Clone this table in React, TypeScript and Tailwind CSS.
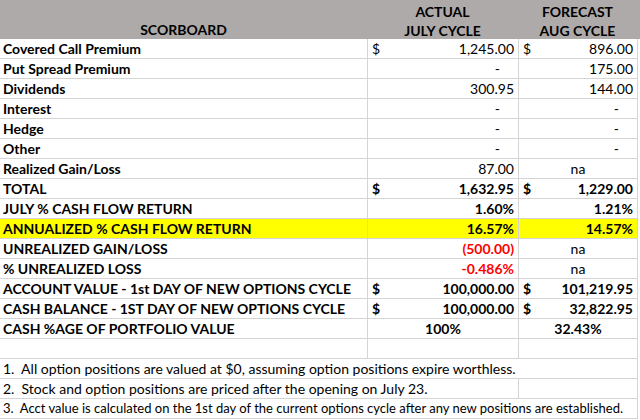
import React from "react";

type Cell = {
  v?: string;
  dollar?: boolean;
  bold?: boolean;
  red?: boolean;
  center?: boolean;
  dash?: boolean;
};

type Row = {
  label: string;
  a?: Cell;
  f?: Cell;
  yellow?: boolean;
};

const rows: Row[] = [
  { label: "Covered Call Premium", a: { v: "1,245.00", dollar: true }, f: { v: "896.00", dollar: true } },
  { label: "Put Spread Premium", a: { v: "-", dash: true }, f: { v: "175.00" } },
  { label: "Dividends", a: { v: "300.95" }, f: { v: "144.00" } },
  { label: "Interest", a: { v: "-", dash: true }, f: { v: "-", dash: true } },
  { label: "Hedge", a: { v: "-", dash: true }, f: { v: "-", dash: true } },
  { label: "Other", a: { v: "-", dash: true }, f: { v: "-", dash: true } },
  { label: "Realized Gain/Loss", a: { v: "87.00" }, f: { v: "na", center: true } },
  { label: "TOTAL", a: { v: "1,632.95", dollar: true, bold: true }, f: { v: "1,229.00", dollar: true, bold: true } },
  { label: "JULY % CASH FLOW RETURN", a: { v: "1.60%", bold: true }, f: { v: "1.21%", bold: true } },
  { label: "ANNUALIZED % CASH FLOW RETURN", a: { v: "16.57%", bold: true }, f: { v: "14.57%", bold: true }, yellow: true },
  { label: "UNREALIZED GAIN/LOSS", a: { v: "(500.00)", bold: true, red: true }, f: { v: "na", center: true } },
  { label: "% UNREALIZED LOSS", a: { v: "-0.486%", bold: true, red: true }, f: { v: "na", center: true } },
  { label: "ACCOUNT VALUE - 1st DAY OF NEW OPTIONS CYCLE", a: { v: "100,000.00", dollar: true, bold: true }, f: { v: "101,219.95", dollar: true, bold: true } },
  { label: "CASH BALANCE - 1ST DAY OF NEW OPTIONS CYCLE", a: { v: "100,000.00", dollar: true, bold: true }, f: { v: "32,822.95", dollar: true, bold: true } },
  { label: "CASH %AGE OF PORTFOLIO VALUE", a: { v: "100%", bold: true, center: true }, f: { v: "32.43%", bold: true, center: true } },
  { label: "" },
];

function ValueCell({ c, width }: { c?: Cell; width: string }) {
  return (
    <div
      className={`${width} h-full border-l border-[#d4d4d4] flex items-center px-[4px] ${
        c?.bold ? "font-bold" : "font-normal"
      } ${c?.red ? "text-[#ff0000]" : "text-black"}`}
    >
      {c?.dollar && <span>$</span>}
      {c && (
        <span
          className={`flex-1 ${c.center ? "text-center" : "text-right"} ${
            c.dash ? "pr-[14px]" : ""
          }`}
        >
          {c.v}
        </span>
      )}
    </div>
  );
}

export default function App() {
  return (
    <div className="w-[640px] h-[420px] bg-white overflow-hidden text-[14px] text-black font-['Lato','Liberation_Sans',sans-serif]">
      {/* header */}
      <div className="h-[39px] bg-[#aeaaaa] flex font-bold leading-[19px] pt-[2px]">
        <div className="w-[367px] flex flex-col justify-end text-center">SCORBOARD</div>
        <div className="w-[151px] flex flex-col items-center justify-center">
          <span>ACTUAL</span>
          <span>JULY CYCLE</span>
        </div>
        <div className="w-[119px] flex flex-col items-center justify-center">
          <span>FORECAST</span>
          <span>AUG CYCLE</span>
        </div>
      </div>

      <div className="w-[638px]">
        {rows.map((r, i) => (
          <div
            key={i}
            className={`h-[20px] flex border-b border-[#d4d4d4] border-r ${
              r.yellow ? "bg-[#ffff00]" : ""
            }`}
          >
            <div className="w-[367px] shrink-0 flex items-center px-[3px] font-bold whitespace-nowrap">
              {r.label}
            </div>
            <ValueCell c={r.a} width="w-[151px]" />
            <ValueCell c={r.f} width="w-[119px]" />
          </div>
        ))}

        {/* notes */}
        <div className="h-[20px] flex items-center border-b border-r border-[#d4d4d4] px-[3px] whitespace-nowrap">
          1.&nbsp; All option positions are valued at $0, assuming option positions expire worthless.
        </div>
        <div className="h-[20px] flex border-b border-r border-[#d4d4d4]">
          <div className="w-[518px] flex items-center px-[3px] whitespace-nowrap">
            2.&nbsp; Stock and option positions are priced after the opening on July 23.
          </div>
          <div className="flex-1 border-l border-[#d4d4d4]" />
        </div>
        <div className="h-[20px] flex items-center border-b border-r border-[#d4d4d4] px-[3px] whitespace-nowrap text-[13px]">
          3.&nbsp; Acct value is calculated on the 1st day of the current options cycle after any new positions are established.
        </div>
      </div>
    </div>
  );
}
